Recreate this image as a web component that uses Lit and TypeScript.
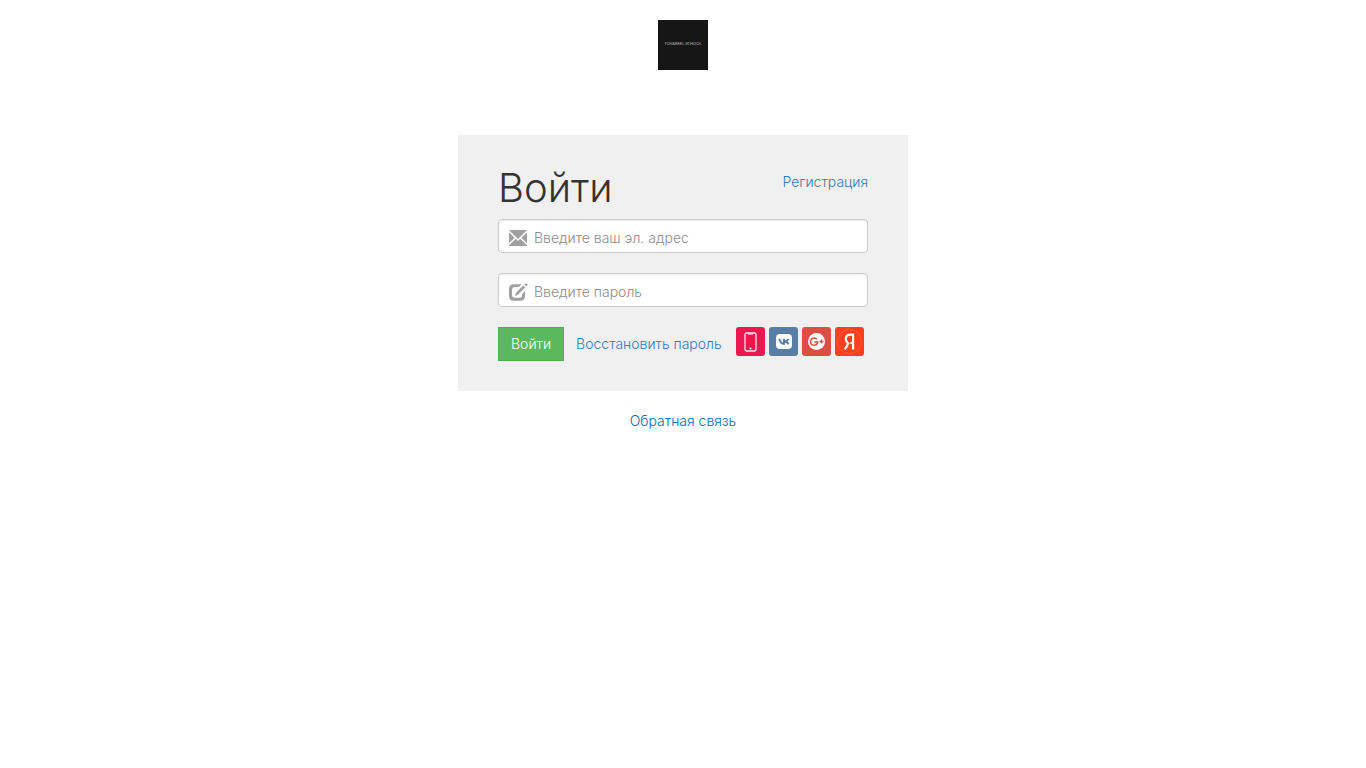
import { LitElement, html, css } from "lit";
import { customElement } from "lit/decorators.js";

@customElement("app-root")
export class AppRoot extends LitElement {
  static styles = css`
    :host {
      display: block;
      font-family: Inter, "Open Sans", sans-serif;
      font-size: 14px;
      font-weight: 300;
      line-height: 20px;
      color: #333;
    }
    * {
      box-sizing: border-box;
    }
    .page {
      display: flex;
      flex-direction: column;
      align-items: center;
      padding: 20px;
    }
    .logo {
      display: block;
      width: 50px;
      height: 50px;
      margin-bottom: 65px;
    }
    .logo text {
      font-family: Lato, sans-serif;
      font-size: 4px;
      font-weight: 400;
    }
    .card {
      width: 100%;
      max-width: 450px;
      padding: 30px 40px;
      background: #f0f0f0;
    }
    .head {
      display: flex;
      justify-content: space-between;
      align-items: flex-start;
      margin-bottom: 8px;
    }
    h1 {
      margin: 0;
      font-size: 40px;
      font-weight: 300;
      line-height: 46px;
    }
    a {
      color: #337ab7;
      text-decoration: none;
    }
    a:hover {
      text-decoration: underline;
    }
    .register {
      padding-top: 7px;
    }
    .field {
      display: flex;
      align-items: center;
      gap: 6px;
      height: 34px;
      margin-bottom: 20px;
      padding: 4px 10px 0;
      background: #fff;
      border: 1px solid #ccc;
      border-radius: 4px;
      box-shadow: inset 0 1px 1px rgba(0, 0, 0, 0.075);
    }
    .field:focus-within {
      border-color: #66afe9;
    }
    .field svg {
      flex: none;
      width: 19px;
      height: 18px;
      fill: #a0a0a0;
    }
    input {
      flex: 1;
      min-width: 0;
      padding: 0;
      border: 0;
      outline: 0;
      background: none;
      font: inherit;
      color: #555;
    }
    input::placeholder {
      color: #8c8c8c;
      opacity: 1;
    }
    .actions {
      display: flex;
      align-items: flex-start;
    }
    .submit {
      height: 34px;
      padding: 0 12px;
      border: 1px solid #4cae4c;
      background: #5cb85c;
      color: #fff;
      font: inherit;
      cursor: pointer;
    }
    .restore {
      padding: 7px 0 7px 12px;
      white-space: nowrap;
    }
    .social {
      display: flex;
      gap: 4px;
      margin-left: auto;
      padding-right: 4px;
    }
    .social a,
    .social svg {
      display: block;
      width: 29px;
      height: 29px;
    }
    .feedback {
      margin-top: 20px;
      color: #006dab;
    }
  `;

  render() {
    return html`
      <main class="page">
        <svg class="logo" viewBox="0 0 50 50" role="img" aria-label="Tovareel School">
          <rect width="50" height="50" fill="#161616" />
          <text x="25" y="25" text-anchor="middle" fill="#bbb">TOVAREEL SCHOOL</text>
        </svg>
        <form class="card" @submit=${(e: Event) => e.preventDefault()}>
          <div class="head">
            <h1>Войти</h1>
            <a class="register" href="#register">Регистрация</a>
          </div>
          <label class="field">
            <svg viewBox="0 0 19 18" aria-hidden="true">
              <path d="M0 1h18L9 10zM0 3.2 5.6 8.7 0 14.2zM18 3.2v11l-5.6-5.5zM0 17v-.7l6.8-6.500L9 12l2.200-2.200 6.800 6.500v.7z" />
            </svg>
            <input type="email" placeholder="Введите ваш эл. адрес" aria-label="Введите ваш эл. адрес" />
          </label>
          <label class="field">
            <svg viewBox="0 0 19 18" aria-hidden="true">
              <path d="M4.500 1.300h8L9.700 4.100H6Q3 4.100 3 7v4.700Q3 14.700 6 14.700h4.500Q13 14.700 13 12.200v-1.200l3-3v5q0 4.700-4.700 4.700H4.700Q0 17.700 0 13V6q0-4.700 4.500-4.700z" />
              <path d="M14.200 2.600 16.200 4.600 9 11.800 6 13l1-3.300zM15.300 1.500 16.300.500q.6-.5 1.200 0l.8.800q.5.600 0 1.200l-1 1z" />
            </svg>
            <input type="password" placeholder="Введите пароль" aria-label="Введите пароль" />
          </label>
          <div class="actions">
            <button class="submit" type="submit">Войти</button>
            <a class="restore" href="#restore">Восстановить пароль</a>
            <nav class="social" aria-label="Социальные сети">
              <a href="#phone" aria-label="Телефон">
                <svg viewBox="0 0 29 29">
                  <rect width="29" height="29" rx="3" fill="#ed174f" />
                  <rect x="9" y="6" width="11" height="18" rx="1.500" fill="none" stroke="#fff" stroke-width="1.300" stroke-opacity=".9" />
                  <path d="M12 6.500h5v1h-5z" fill="#fff" />
                  <circle cx="14.500" cy="21.500" r="1" fill="#fff" />
                </svg>
              </a>
              <a href="#vk" aria-label="ВКонтакте">
                <svg viewBox="0 0 29 29">
                  <rect width="29" height="29" rx="3" fill="#587ea3" />
                  <rect x="7" y="7" width="16" height="15" rx="4" fill="#fff" />
                  <path d="M10.300 11.800q1 4.900 4.700 5.100v-5.100M19.500 11.800q-1 2.200-3.800 2.700 2.800.4 4 2.700" fill="none" stroke="#587ea3" stroke-width="1.900" />
                </svg>
              </a>
              <a href="#google" aria-label="Google+">
                <svg viewBox="0 0 29 29">
                  <rect width="29" height="29" rx="3" fill="#dc4e41" />
                  <circle cx="14.500" cy="14.500" r="8.500" fill="#fff" />
                  <path d="M14.700 12.200a3.600 3.600 0 1 0 1 2.700h-3.500M19.500 12.600v4M17.500 14.600h4" fill="none" stroke="#dc4e41" stroke-width="1.500" />
                </svg>
              </a>
              <a href="#yandex" aria-label="Яндекс">
                <svg viewBox="0 0 29 29">
                  <rect width="29" height="29" rx="3" fill="#fc3f1d" />
                  <circle cx="14.500" cy="14.500" r="12" fill="none" stroke="#fff" stroke-opacity=".12" />
                  <path d="M18.100 22.500V7.600h-2.300q-5 0-5 4.300 0 2.600 2.600 4.600M18.100 16h-2.700M13.700 15.500 9.900 22.500" fill="none" stroke="#fff" stroke-width="2.200" />
                </svg>
              </a>
            </nav>
          </div>
        </form>
        <a class="feedback" href="#feedback">Обратная связь</a>
      </main>
    `;
  }
}
